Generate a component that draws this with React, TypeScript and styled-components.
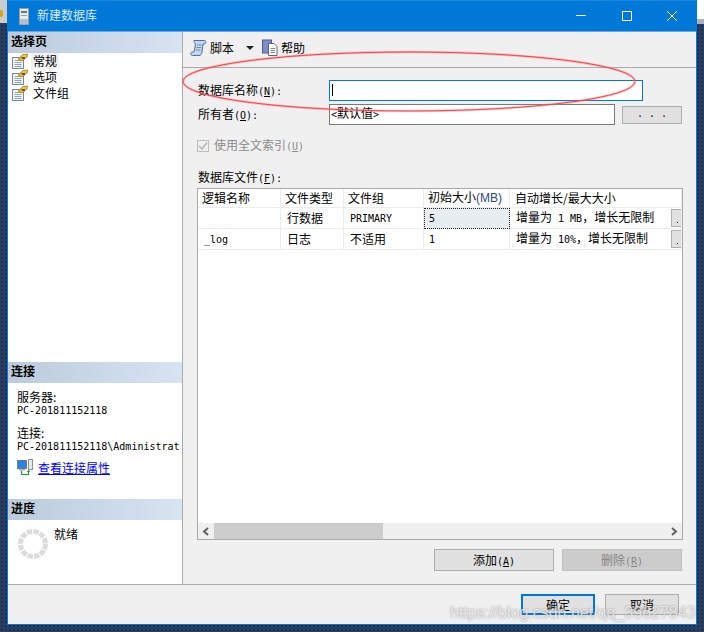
import styled, { createGlobalStyle } from 'styled-components';

const GlobalStyle = createGlobalStyle`
  html, body {
    margin: 0;
    padding: 0;
    background: #2a3f5f;
  }
  * {
    box-sizing: border-box;
  }
`;

const Desktop = styled.div`
  position: relative;
  width: 704px;
  height: 632px;
  overflow: hidden;
  background-color: #2a3f5f;
  background-image: radial-gradient(#1f3150 1px, transparent 1px);
  background-size: 4px 4px;
  font-family: "Noto Sans CJK SC", "Liberation Sans", sans-serif;
  font-size: 12px;
  line-height: 14px;
  color: #000;
`;

const BehindLeft = styled.div`
  position: absolute;
  left: 0;
  top: 0;
  width: 7px;
  height: 23px;
  background: #c9cdd2;
  &::after {
    content: '';
    position: absolute;
    left: 0;
    top: 10px;
    width: 3px;
    height: 7px;
    background: #d9a520;
    border-radius: 0 2px 2px 0;
  }
`;

const BehindRight = styled.div`
  position: absolute;
  right: 0;
  top: 0;
  width: 7px;
  height: 24px;
  background: #fff;
  border-bottom: 5px solid #a9b2bd;
`;

const Window = styled.div`
  position: absolute;
  left: 7px;
  top: 0;
  width: 690px;
  height: 625px;
  display: flex;
  flex-direction: column;
  border: 1px solid #0078d7;
  border-top: none;
  background: #f0f0f0;
`;

const TitleBar = styled.div`
  height: 32px;
  flex: none;
  display: flex;
  align-items: center;
  padding: 0 2px 0 11px;
  background: #0078d7;
  border-top: 1px solid #1a88de;
  border-bottom: 1px solid #66a9e2;
  color: #d8ebfa;
`;

const TitleText = styled.span`
  margin: -2px 0 0 8px;
  flex: 1;
`;

const WinButton = styled.div`
  width: 45px;
  height: 30px;
  display: flex;
  align-items: center;
  justify-content: center;
  margin-top: -1px;
`;

const Body = styled.div`
  flex: 1;
  min-height: 0;
  display: flex;
  border-bottom: 1px solid #aaaaaf;
`;

const SidePane = styled.div`
  width: 175px;
  flex: none;
  display: flex;
  flex-direction: column;
  background: #fff;
  border-right: 1px solid #a9a9ae;
`;

const SideHeader = styled.div`
  height: 21px;
  flex: none;
  display: flex;
  align-items: center;
  padding: 0 0 3px 3px;
  font-weight: 700;
  background: linear-gradient(to right, #bccbdb, #d6e4f2);
`;

const SideSection = styled.div<{ $height?: number }>`
  flex: ${({ $height }) => ($height ? `0 0 ${$height}px` : '1')};
  display: flex;
  flex-direction: column;
`;

const NavList = styled.div`
  display: flex;
  flex-direction: column;
  padding: 0 0 0 4px;
`;

const NavItem = styled.div`
  height: 16px;
  display: flex;
  align-items: center;
  gap: 3px;
`;

const NavLabel = styled.span<{ $active?: boolean }>`
  padding: 0 2px;
  background: ${({ $active }) => ($active ? '#f0f0f0' : 'transparent')};
  line-height: 16px;
`;

const ConnBody = styled.div`
  display: flex;
  flex-direction: column;
  padding: 8px 0 0 9px;
`;

const ConnLine = styled.div<{ $gap?: number }>`
  height: 12px;
  margin-top: ${({ $gap }) => $gap ?? 0}px;
  line-height: 12px;
  white-space: nowrap;
`;

const ConnLink = styled.div`
  display: flex;
  align-items: center;
  gap: 5px;
  margin-top: 8px;
`;

const LinkText = styled.a`
  color: #0000ff;
  text-decoration: underline;
  cursor: pointer;
`;

const ProgressBody = styled.div`
  display: flex;
  padding: 9px 0 0 10px;
  gap: 6px;
`;

const ProgressText = styled.span`
  margin-top: -2px;
`;

const MainPane = styled.div`
  flex: 1;
  min-width: 0;
  display: flex;
  flex-direction: column;
`;

const Toolbar = styled.div`
  height: 36px;
  flex: none;
  display: flex;
  align-items: center;
  padding: 0 0 4px 7px;
  border-bottom: 1px solid #aaaaaf;
`;

const ToolText = styled.span`
  margin-left: 3px;
`;

const ToolArrow = styled.span`
  width: 0;
  height: 0;
  margin: 1px 8px 0 12px;
  border-left: 4px solid transparent;
  border-right: 4px solid transparent;
  border-top: 4px solid #222;
`;

const Form = styled.div`
  flex: 1;
  min-height: 0;
  display: flex;
  flex-direction: column;
  padding: 12px 14px 13px 15px;
`;

const FieldRow = styled.div`
  display: flex;
  align-items: center;
  height: 21px;
  margin-bottom: 3px;
`;

const FieldLabel = styled.label`
  width: 131px;
  flex: none;
`;

const TextBox = styled.div<{ $width: number; $focused?: boolean }>`
  width: ${({ $width }) => $width}px;
  height: 21px;
  padding: 1px 1px 0;
  background: #fff;
  border: 1px solid ${({ $focused }) => ($focused ? '#0078d7' : '#7a7a7a')};
  line-height: 13px;
  overflow: hidden;
`;

const Caret = styled.div`
  width: 1px;
  height: 12px;
  margin: 2px 0 0 1px;
  background: #000;
`;

const DotsButton = styled.div`
  width: 60px;
  height: 18px;
  margin-left: 7px;
  display: flex;
  align-items: center;
  justify-content: center;
  background: #e1e1e1;
  border: 1px solid #adadad;
  font-family: "Liberation Mono", monospace;
  font-size: 10px;
`;

const CheckRow = styled.div`
  display: flex;
  align-items: center;
  gap: 5px;
  height: 14px;
  margin: 11px 0 0 -1px;
  color: #8a8a8a;
`;

const CheckBox = styled.div`
  width: 12px;
  height: 12px;
  display: flex;
  align-items: center;
  justify-content: center;
  border: 1px solid #bdbdbd;
  background: #f0f0f0;
`;

const GridLabel = styled.div`
  height: 14px;
  margin-top: 17px;
`;

const DataGrid = styled.div`
  flex: 1;
  min-height: 0;
  margin: 4px -1px 0 -1px;
  display: flex;
  flex-direction: column;
  background: #fff;
  border: 1px solid #aaaaaf;
`;

const GridRows = styled.div`
  flex: 1;
  min-height: 0;
  display: grid;
  grid-template-columns: 83px 63px 80px 86px 1fr;
  grid-auto-rows: min-content;
  overflow: hidden;
`;

const Cell = styled.div<{ $pad?: number; $selected?: boolean; $height?: number }>`
  height: ${({ $height }) => $height ?? 21}px;
  display: flex;
  align-items: center;
  justify-content: space-between;
  padding-left: ${({ $pad }) => $pad ?? 6}px;
  white-space: nowrap;
  overflow: hidden;
  border-right: 1px solid #ececec;
  border-bottom: 1px solid #ececec;
  background: ${({ $selected }) => ($selected ? '#e8edf1' : 'transparent')};
  outline: ${({ $selected }) => ($selected ? '1px dotted #222' : 'none')};
  outline-offset: -1px;
`;

const CellText = styled.span`
  margin-top: -1px;
`;

const CellButton = styled.div`
  width: 10px;
  height: 18px;
  flex: none;
  position: relative;
  background: #e1e1e1;
  border: 1px solid #adadad;
  border-right: none;
  &::after {
    content: '';
    position: absolute;
    left: 5px;
    bottom: 3px;
    width: 1px;
    height: 1px;
    background: #000;
  }
`;

const HScroll = styled.div`
  height: 16px;
  flex: none;
  display: flex;
  align-items: center;
  background: #f0f0f0;
`;

const ScrollEnd = styled.div`
  width: 16px;
  height: 16px;
  flex: none;
  display: flex;
  align-items: center;
  justify-content: center;
`;

const ScrollTrack = styled.div`
  flex: 1;
  height: 16px;
`;

const ScrollThumb = styled.div`
  height: 16px;
  background: #cdcdcd;
`;

const ActionRow = styled.div`
  display: flex;
  justify-content: flex-end;
  gap: 8px;
  margin-top: 9px;
  flex: none;
`;

const Button = styled.div<{ $disabled?: boolean; $primary?: boolean; $width: number; $height: number }>`
  width: ${({ $width }) => $width}px;
  height: ${({ $height }) => $height}px;
  display: flex;
  align-items: center;
  justify-content: center;
  padding-top: 1px;
  background: ${({ $disabled }) => ($disabled ? '#cccccc' : '#e1e1e1')};
  color: ${({ $disabled }) => ($disabled ? '#858585' : '#000')};
  border: ${({ $primary, $disabled }) =>
    $primary ? '2px solid #0078d7' : `1px solid ${$disabled ? '#bfbfbf' : '#adadad'}`};
`;

const Footer = styled.div`
  height: 39px;
  flex: none;
  display: flex;
  justify-content: flex-end;
  gap: 10px;
  padding: 9px 17px 0 0;
`;

const Lat = styled.span`
  font-family: "DejaVu Sans Mono", "Liberation Mono", monospace;
  font-size: 10px;
`;

const Mnemonic = styled.span`
  text-decoration: underline;
`;

const SansLat = styled.span`
  font-family: "Liberation Sans", sans-serif;
  color: #2d4a78;
`;

const Overlay = styled.svg`
  position: absolute;
  left: 0;
  top: 0;
  pointer-events: none;
`;

const Watermark = styled.div`
  position: absolute;
  left: 450px;
  top: 604px;
  font-family: "Liberation Sans", sans-serif;
  font-size: 16px;
  line-height: 18px;
  white-space: nowrap;
  color: rgba(255, 255, 255, 0.72);
  text-shadow: 0 0 2px rgba(110, 110, 110, 0.8);
`;

const ServerIcon = () => (
  <svg width="10" height="17" viewBox="0 0 10 17">
    <rect x="0.5" y="0.5" width="9" height="16" fill="#e8eaec" stroke="#9aa0a8" />
    <rect x="2" y="3" width="6" height="2" fill="#6d7680" />
    <rect x="2" y="7" width="6" height="1" fill="#9aa0a8" />
    <rect x="1" y="11" width="8" height="5" fill="#b9bec4" />
  </svg>
);

const PageIcon = () => (
  <svg width="16" height="16" viewBox="0 0 16 16">
    <rect x="0.5" y="4.5" width="11" height="11" fill="#f4f6f8" stroke="#7d8794" />
    <path d="M2.5 7.5h7M2.5 9.5h7M2.5 11.5h7M2.5 13.5h7" stroke="#8fa3bd" fill="none" />
    <path d="M6 6 L11 1.5 L15.5 1 L15 4 L10 8 Z" fill="#f1c644" stroke="#8a6d14" strokeWidth="0.7" />
    <path d="M9 4h4v2h-3z" fill="#6c5a20" />
  </svg>
);

const ScriptIcon = () => (
  <svg width="17" height="18" viewBox="0 0 17 18">
    <path
      d="M4 1.5h10.500c1.800 0 2 3.500-.500 3.500h-1l-1 8c-.3 2-1.200 3.500-3 3.500H2.500c-2.300 0-2.500-3.500 0-3.500H4l1.500-8C5 3.500 3 3.500 4 1.500z"
      fill="#c5d5ea"
      stroke="#4f6f9f"
    />
    <path d="M7 6h4.500M6.500 8.500h4.500M6 11h4.500" stroke="#6f8cb5" fill="none" />
  </svg>
);

const HelpIcon = () => (
  <svg width="16" height="17" viewBox="0 0 16 17">
    <rect x="0.500" y="1" width="9" height="13" fill="#7f8fc4" stroke="#4a5a94" />
    <path d="M6.500 4.500h5.500l3 3v9h-8.500z" fill="#fff" stroke="#5a6478" />
    <path d="M8.500 9.500h4.500M8.500 11.500h4.500M8.500 13.500h4.500" stroke="#7d8794" fill="none" />
  </svg>
);

const LinkIcon = () => (
  <svg width="16" height="17" viewBox="0 0 16 17">
    <rect x="0.500" y="1.500" width="9" height="8" fill="#2f7fe0" stroke="#6c7c90" />
    <rect x="2" y="10" width="6" height="1.500" fill="#a4acb6" />
    <rect x="11.500" y="0.500" width="4" height="10" fill="#e6e8ea" stroke="#8a929c" />
    <path d="M4.500 12v3.500h7V12.500" fill="none" stroke="#1f9a2a" strokeWidth="1.200" />
    <path d="M9.500 13l2-2 2 2z" fill="#1f9a2a" />
  </svg>
);

const SpinnerIcon = () => (
  <svg width="30" height="30" viewBox="0 0 30 30">
    <circle
      cx="15"
      cy="15"
      r="12.500"
      fill="none"
      stroke="#dcdcdc"
      strokeWidth="5"
      strokeDasharray="5.300 1.245"
    />
  </svg>
);

const CheckMark = () => (
  <svg width="10" height="10" viewBox="0 0 10 10">
    <path d="M1 5l3 3 5-6.500" fill="none" stroke="#b5b5b5" strokeWidth="1.500" />
  </svg>
);

const navItems = ['常规', '选项', '文件组'];

const App = () => {
  return (
    <>
      <GlobalStyle />
      <Desktop>
        <BehindLeft />
        <BehindRight />
        <Window>
          <TitleBar>
            <ServerIcon />
            <TitleText>新建数据库</TitleText>
            <WinButton>
              <svg width="11" height="11" viewBox="0 0 11 11">
                <path d="M0 5.500h10" stroke="#fff" fill="none" />
              </svg>
            </WinButton>
            <WinButton>
              <svg width="10" height="10" viewBox="0 0 10 10">
                <rect x="0.500" y="0.500" width="9" height="9" stroke="#fff" fill="none" />
              </svg>
            </WinButton>
            <WinButton>
              <svg width="10" height="10" viewBox="0 0 10 10">
                <path d="M0 0l10 10M10 0L0 10" stroke="#fff" fill="none" />
              </svg>
            </WinButton>
          </TitleBar>
          <Body>
            <SidePane>
              <SideSection>
                <SideHeader>选择页</SideHeader>
                <NavList>
                  {navItems.map((item, i) => (
                    <NavItem key={item}>
                      <PageIcon />
                      <NavLabel $active={i === 0}>{item}</NavLabel>
                    </NavItem>
                  ))}
                </NavList>
              </SideSection>
              <SideSection $height={137}>
                <SideHeader>连接</SideHeader>
                <ConnBody>
                  <ConnLine>服务器:</ConnLine>
                  <ConnLine>
                    <Lat>PC-201811152118</Lat>
                  </ConnLine>
                  <ConnLine $gap={12}>连接:</ConnLine>
                  <ConnLine>
                    <Lat>PC-201811152118\Administrat</Lat>
                  </ConnLine>
                  <ConnLink>
                    <LinkIcon />
                    <LinkText>查看连接属性</LinkText>
                  </ConnLink>
                </ConnBody>
              </SideSection>
              <SideSection $height={85}>
                <SideHeader>进度</SideHeader>
                <ProgressBody>
                  <SpinnerIcon />
                  <ProgressText>就绪</ProgressText>
                </ProgressBody>
              </SideSection>
            </SidePane>
            <MainPane>
              <Toolbar>
                <ScriptIcon />
                <ToolText>脚本</ToolText>
                <ToolArrow />
                <HelpIcon />
                <ToolText>帮助</ToolText>
              </Toolbar>
              <Form>
                <FieldRow>
                  <FieldLabel>
                    数据库名称<Lat>(<Mnemonic>N</Mnemonic>):</Lat>
                  </FieldLabel>
                  <TextBox $width={314} $focused>
                    <Caret />
                  </TextBox>
                </FieldRow>
                <FieldRow>
                  <FieldLabel>
                    所有者<Lat>(<Mnemonic>O</Mnemonic>):</Lat>
                  </FieldLabel>
                  <TextBox $width={286}>
                    <Lat>&lt;</Lat>默认值<Lat>&gt;</Lat>
                  </TextBox>
                  <DotsButton>. . .</DotsButton>
                </FieldRow>
                <CheckRow>
                  <CheckBox>
                    <CheckMark />
                  </CheckBox>
                  <span>
                    使用全文索引<Lat>(<Mnemonic>U</Mnemonic>)</Lat>
                  </span>
                </CheckRow>
                <GridLabel>
                  数据库文件<Lat>(<Mnemonic>F</Mnemonic>):</Lat>
                </GridLabel>
                <DataGrid>
                  <GridRows>
                    <Cell $pad={4} $height={19}><CellText>逻辑名称</CellText></Cell>
                    <Cell $pad={4} $height={19}><CellText>文件类型</CellText></Cell>
                    <Cell $pad={4} $height={19}><CellText>文件组</CellText></Cell>
                    <Cell $pad={4} $height={19}>
                      <CellText>
                        初始大小<SansLat>(MB)</SansLat>
                      </CellText>
                    </Cell>
                    <Cell $pad={5} $height={19}><CellText>自动增长/最大大小</CellText></Cell>

                    <Cell />
                    <Cell><CellText>行数据</CellText></Cell>
                    <Cell>
                      <CellText><Lat>PRIMARY</Lat></CellText>
                    </Cell>
                    <Cell $pad={5} $selected>
                      <CellText><Lat>5</Lat></CellText>
                    </Cell>
                    <Cell>
                      <CellText>
                        增量为<Lat> 1 MB</Lat>，增长无限制
                      </CellText>
                      <CellButton />
                    </Cell>

                    <Cell>
                      <CellText><Lat>_log</Lat></CellText>
                    </Cell>
                    <Cell><CellText>日志</CellText></Cell>
                    <Cell><CellText>不适用</CellText></Cell>
                    <Cell $pad={5}>
                      <CellText><Lat>1</Lat></CellText>
                    </Cell>
                    <Cell>
                      <CellText>
                        增量为<Lat> 10%</Lat>，增长无限制
                      </CellText>
                      <CellButton />
                    </Cell>
                  </GridRows>
                  <HScroll>
                    <ScrollEnd>
                      <svg width="8" height="9" viewBox="0 0 8 9">
                        <path d="M6 1L2 4.500 6 8" fill="none" stroke="#606060" strokeWidth="2" />
                      </svg>
                    </ScrollEnd>
                    <ScrollTrack>
                      <ScrollThumb style={{ width: `${(170 / 456) * 100}%` }} />
                    </ScrollTrack>
                    <ScrollEnd>
                      <svg width="8" height="9" viewBox="0 0 8 9">
                        <path d="M2 1l4 3.500L2 8" fill="none" stroke="#606060" strokeWidth="2" />
                      </svg>
                    </ScrollEnd>
                  </HScroll>
                </DataGrid>
                <ActionRow>
                  <Button $width={120} $height={22}>
                    <span>
                      添加<Lat>(<Mnemonic>A</Mnemonic>)</Lat>
                    </span>
                  </Button>
                  <Button $width={120} $height={22} $disabled>
                    <span>
                      删除<Lat>(<Mnemonic>R</Mnemonic>)</Lat>
                    </span>
                  </Button>
                </ActionRow>
              </Form>
            </MainPane>
          </Body>
          <Footer>
            <Button $width={74} $height={21} $primary>确定</Button>
            <Button $width={74} $height={21}>取消</Button>
          </Footer>
        </Window>
        <Overlay width="704" height="632" viewBox="0 0 704 632">
          <ellipse cx="409" cy="81.500" rx="226" ry="29.500" fill="none" stroke="#ff6b70" strokeOpacity="0.4" strokeWidth="2.500" />
          <ellipse cx="409" cy="81.500" rx="226" ry="29.500" fill="none" stroke="#f6434b" strokeWidth="1" />
        </Overlay>
        <Watermark>https://blog.csdn.net/qq_39627843</Watermark>
      </Desktop>
    </>
  );
};

export default App;
